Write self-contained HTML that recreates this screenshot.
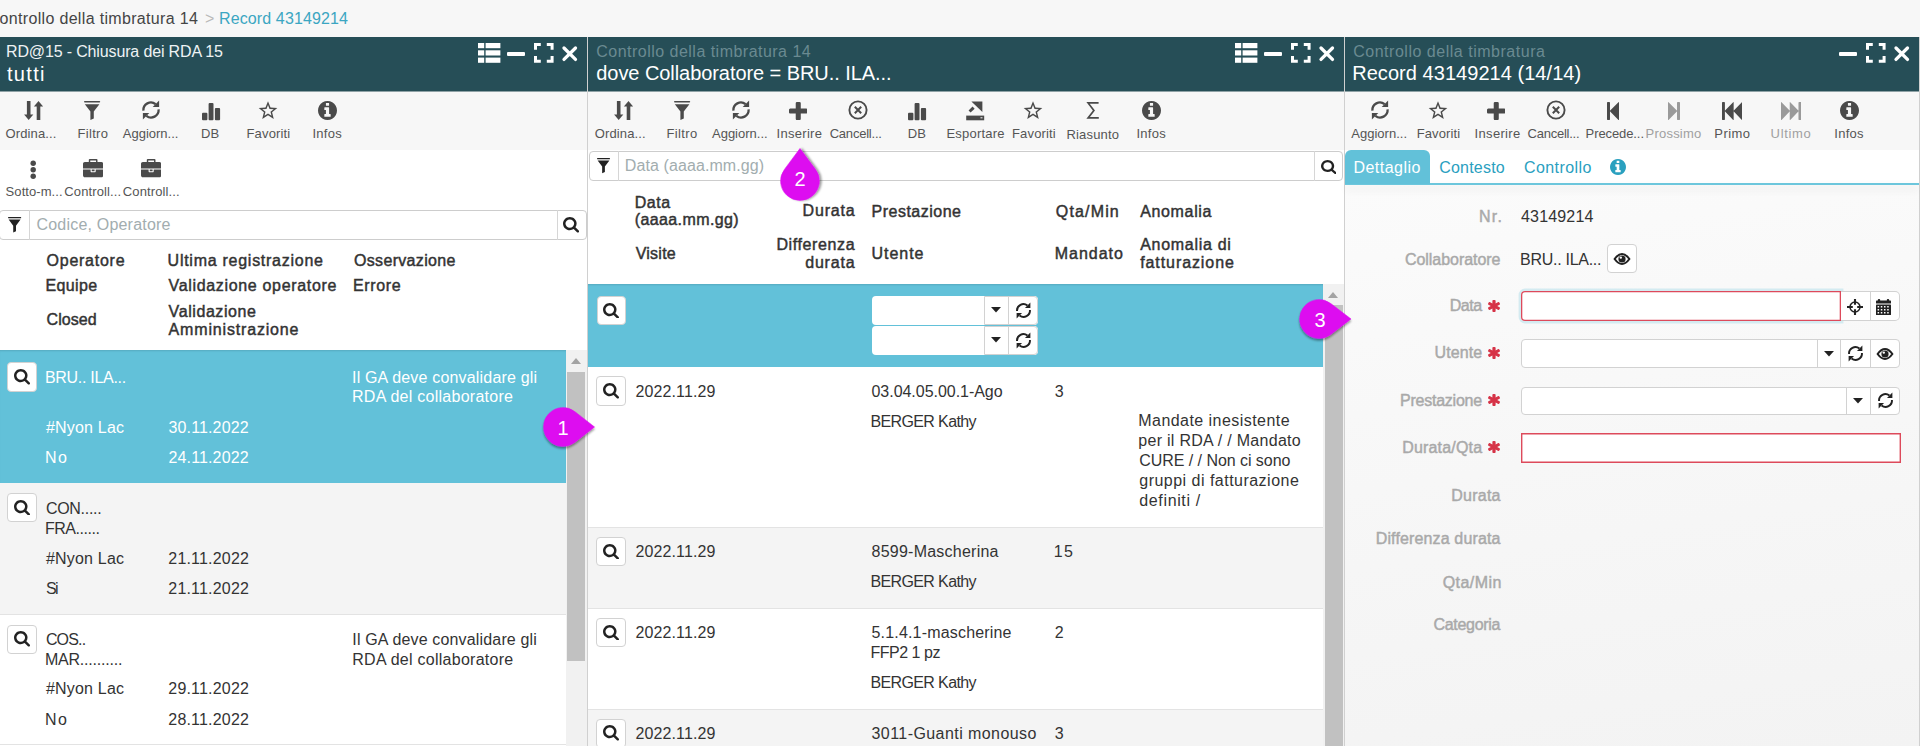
<!DOCTYPE html><html><head><meta charset='utf-8'><title>Controllo della timbratura</title><style>
html,body{margin:0;padding:0;width:1920px;height:746px;overflow:hidden;background:#f7f7f7;position:relative;font-family:"Liberation Sans",sans-serif;}
.t{position:absolute;white-space:nowrap;line-height:1;font-family:"Liberation Sans",sans-serif;}
svg{display:block}
</style></head><body>
<div class='t' style='left:-0.50px;top:11.40px;font-size:16px;color:#454545;letter-spacing:0.332px;'>ontrollo della timbratura 14</div>
<div class='t' style='left:205.00px;top:11.40px;font-size:16px;color:#b9b9b9;'>&gt;</div>
<div class='t' style='left:219.00px;top:11.40px;font-size:16px;color:#3ba6c2;letter-spacing:0.121px;'>Record 43149214</div>
<div style='position:absolute;left:-1px;top:37px;width:588px;height:54px;background:#264e57'></div>
<div style='position:absolute;left:-1px;top:91px;width:588px;height:1px;background:#8fa2a6'></div>
<div style='position:absolute;left:-1px;top:92px;width:588px;height:58px;background:#f7f7f7'></div>
<div style='position:absolute;left:588px;top:37px;width:756px;height:54px;background:#264e57'></div>
<div style='position:absolute;left:588px;top:91px;width:756px;height:1px;background:#8fa2a6'></div>
<div style='position:absolute;left:588px;top:92px;width:756px;height:58px;background:#f7f7f7'></div>
<div style='position:absolute;left:1345px;top:37px;width:574px;height:54px;background:#264e57'></div>
<div style='position:absolute;left:1345px;top:91px;width:574px;height:1px;background:#8fa2a6'></div>
<div style='position:absolute;left:1345px;top:92px;width:574px;height:58px;background:#f7f7f7'></div>
<div style='position:absolute;left:0px;top:150px;width:587px;height:596px;background:#fff'></div>
<div style='position:absolute;left:588px;top:150px;width:756px;height:596px;background:#fff'></div>
<div style='position:absolute;left:1345px;top:185px;width:574px;height:561px;background:linear-gradient(172deg,#fbfbfb 0%,#f6f6f6 60%,#f3f3f3 100%)'></div>
<div style='position:absolute;left:587px;top:37px;width:1px;height:709px;background:#d0d0d0'></div>
<div style='position:absolute;left:1344px;top:37px;width:1px;height:709px;background:#d0d0d0'></div>
<div style='position:absolute;left:1919px;top:37px;width:1px;height:709px;background:#d0d0d0'></div>
<svg style='position:absolute;left:478.20px;top:42.70px;overflow:visible' width='22.4' height='19.8' viewBox='0 0 22.4 19.8'><g fill='#fff'><rect x='0' y='0' width='6.2' height='5.2'/><rect x='7.6' y='0' width='14.8' height='5.2'/><rect x='0' y='7.3' width='6.2' height='5.2'/><rect x='7.6' y='7.3' width='14.8' height='5.2'/><rect x='0' y='14.6' width='6.2' height='5.2'/><rect x='7.6' y='14.6' width='14.8' height='5.2'/></g></svg>
<div style='position:absolute;left:507.4px;top:51.8px;width:17.6px;height:4px;background:#fff;border-radius:1px'></div>
<svg style='position:absolute;left:533.60px;top:43.00px;overflow:visible' width='19.6' height='19.7' viewBox='0 0 19.6 19.7'><path d='M1.5 6.8V1.5H6.8M12.8 1.5h5.3V6.8M18.1 12.9v5.3H12.8M6.8 18.2H1.5V12.9' fill='none' stroke='#fff' stroke-width='3'/></svg>
<svg style='position:absolute;left:561.50px;top:45.60px;overflow:visible' width='15.5' height='15.4' viewBox='0 0 15.5 15.4'><path d='M2 2L13.5 13.4M13.5 2L2 13.4' stroke='#fff' stroke-width='3.3' stroke-linecap='round'/></svg>
<svg style='position:absolute;left:1235.20px;top:42.70px;overflow:visible' width='22.4' height='19.8' viewBox='0 0 22.4 19.8'><g fill='#fff'><rect x='0' y='0' width='6.2' height='5.2'/><rect x='7.6' y='0' width='14.8' height='5.2'/><rect x='0' y='7.3' width='6.2' height='5.2'/><rect x='7.6' y='7.3' width='14.8' height='5.2'/><rect x='0' y='14.6' width='6.2' height='5.2'/><rect x='7.6' y='14.6' width='14.8' height='5.2'/></g></svg>
<div style='position:absolute;left:1264.4px;top:51.8px;width:17.6px;height:4px;background:#fff;border-radius:1px'></div>
<svg style='position:absolute;left:1290.60px;top:43.00px;overflow:visible' width='19.6' height='19.7' viewBox='0 0 19.6 19.7'><path d='M1.5 6.8V1.5H6.8M12.8 1.5h5.3V6.8M18.1 12.9v5.3H12.8M6.8 18.2H1.5V12.9' fill='none' stroke='#fff' stroke-width='3'/></svg>
<svg style='position:absolute;left:1318.50px;top:45.60px;overflow:visible' width='15.5' height='15.4' viewBox='0 0 15.5 15.4'><path d='M2 2L13.5 13.4M13.5 2L2 13.4' stroke='#fff' stroke-width='3.3' stroke-linecap='round'/></svg>
<div style='position:absolute;left:1839.4px;top:51.8px;width:17.6px;height:4px;background:#fff;border-radius:1px'></div>
<svg style='position:absolute;left:1865.60px;top:43.00px;overflow:visible' width='19.6' height='19.7' viewBox='0 0 19.6 19.7'><path d='M1.5 6.8V1.5H6.8M12.8 1.5h5.3V6.8M18.1 12.9v5.3H12.8M6.8 18.2H1.5V12.9' fill='none' stroke='#fff' stroke-width='3'/></svg>
<svg style='position:absolute;left:1893.50px;top:45.60px;overflow:visible' width='15.5' height='15.4' viewBox='0 0 15.5 15.4'><path d='M2 2L13.5 13.4M13.5 2L2 13.4' stroke='#fff' stroke-width='3.3' stroke-linecap='round'/></svg>
<div class='t' style='left:6.00px;top:43.60px;font-size:16px;color:#eef3f4;letter-spacing:-0.145px;'>RD@15 - Chiusura dei RDA 15</div>
<div class='t' style='left:7.00px;top:63.60px;font-size:20px;color:#fff;letter-spacing:1.302px;'>tutti</div>
<div class='t' style='left:596.30px;top:43.70px;font-size:16px;color:#6a8a91;letter-spacing:0.479px;'>Controllo della timbratura 14</div>
<div class='t' style='left:596.30px;top:63.30px;font-size:20px;color:#fff;letter-spacing:-0.066px;'>dove Collaboratore = BRU.. ILA...</div>
<div class='t' style='left:1353.20px;top:43.70px;font-size:16px;color:#6a8a91;letter-spacing:0.518px;'>Controllo della timbratura</div>
<div class='t' style='left:1352.20px;top:63.30px;font-size:20px;color:#fff;letter-spacing:0.046px;'>Record 43149214 (14/14)</div>
<svg style='position:absolute;left:24.40px;top:101.00px;overflow:visible' width='19' height='19' viewBox='0 0 19 19'><g fill='#4a4a4a'><rect x='2.9' y='0' width='3.6' height='14'/><polygon points='0.1,13.4 9.3,13.4 4.7,19'/><rect x='12.7' y='5' width='3.6' height='14'/><polygon points='9.9,5.6 19.1,5.6 14.5,0'/></g></svg>
<div class='t' style='left:5.60px;top:126.50px;font-size:13px;color:#555;letter-spacing:0.107px;'>Ordina...</div>
<svg style='position:absolute;left:84.40px;top:101.00px;overflow:visible' width='16.2' height='19.0' viewBox='0 0 16.2 19'><g fill='#4a4a4a'><rect x='0' y='0' width='16.2' height='1.6' rx='0.8'/><path d='M0.8 3.2H15.4L9.8 10.6V17.4L6.4 19V10.6Z'/></g></svg>
<div class='t' style='left:77.40px;top:126.50px;font-size:13px;color:#555;letter-spacing:0.348px;'>Filtro</div>
<svg style='position:absolute;left:141.30px;top:100.40px;overflow:visible' width='20.00' height='20.00' viewBox='-10 -10 20 20'><g fill='none' stroke='#4a4a4a' stroke-width='2.3'><path d='M-7.6 0.6A7.5 7.5 0 0 1 4.6 -5.8'/><path d='M7.6 -0.6A7.5 7.5 0 0 1 -4.6 5.8'/></g><g fill='#4a4a4a'><polygon points='8.1,-9.4 8.1,-3.0 1.7,-3.0'/><polygon points='-8.1,9.4 -8.1,3.0 -1.7,3.0'/></g></svg>
<div class='t' style='left:122.80px;top:126.50px;font-size:13px;color:#555;letter-spacing:-0.004px;'>Aggiorn...</div>
<svg style='position:absolute;left:201.75px;top:102.70px;overflow:visible' width='18.1' height='17.3' viewBox='0 0 18.1 17.3'><g fill='#4a4a4a'><rect x='0' y='9.8' width='5.4' height='7.5' rx='1'/><rect x='6.6' y='0' width='4.9' height='17.3' rx='1'/><rect x='12.9' y='4.9' width='5.2' height='12.4' rx='1'/></g></svg>
<div class='t' style='left:201.00px;top:126.50px;font-size:13px;color:#555;letter-spacing:0.012px;'>DB</div>
<svg style='position:absolute;left:257.90px;top:100.70px;overflow:visible' width='20' height='20' viewBox='-10 -10 20 20'><path fill-rule='evenodd' fill='#4a4a4a' d='M0.00 -9.80 L2.53 -3.48 L9.32 -3.03 L4.09 1.33 L5.76 7.93 L0.00 4.30 L-5.76 7.93 L-4.09 1.33 L-9.32 -3.03 L-2.53 -3.48Z M0.00 -6.00 L1.53 -2.10 L5.71 -1.85 L2.47 0.80 L3.53 4.85 L0.00 2.60 L-3.53 4.85 L-2.47 0.80 L-5.71 -1.85 L-1.53 -2.10Z'/></svg>
<div class='t' style='left:246.50px;top:126.50px;font-size:13px;color:#555;letter-spacing:0.153px;'>Favoriti</div>
<svg style='position:absolute;left:317.90px;top:101.00px' width='19.00' height='19.00' viewBox='0 -1408 1536 1536' preserveAspectRatio='none'><path fill='#4a4a4a' transform='scale(1,-1)' d='M1024 160v160q0 14 -9 23t-23 9h-96v512q0 14 -9 23t-23 9h-320q-14 0 -23 -9t-9 -23v-160q0 -14 9 -23t23 -9h96v-320h-96q-14 0 -23 -9t-9 -23v-160q0 -14 9 -23t23 -9h448q14 0 23 9t9 23zM896 1056v160q0 14 -9 23t-23 9h-192q-14 0 -23 -9t-9 -23v-160q0 -14 9 -23
t23 -9h192q14 0 23 9t9 23zM1536 640q0 -209 -103 -385.5t-279.5 -279.5t-385.5 -103t-385.5 103t-279.5 279.5t-103 385.5t103 385.5t279.5 279.5t385.5 103t385.5 -103t279.5 -279.5t103 -385.5z'/></svg>
<div class='t' style='left:312.50px;top:126.50px;font-size:13px;color:#555;letter-spacing:0.254px;'>Infos</div>
<svg style='position:absolute;left:613.70px;top:101.00px;overflow:visible' width='19' height='19' viewBox='0 0 19 19'><g fill='#4a4a4a'><rect x='2.9' y='0' width='3.6' height='14'/><polygon points='0.1,13.4 9.3,13.4 4.7,19'/><rect x='12.7' y='5' width='3.6' height='14'/><polygon points='9.9,5.6 19.1,5.6 14.5,0'/></g></svg>
<div class='t' style='left:594.70px;top:126.50px;font-size:13px;color:#555;letter-spacing:0.132px;'>Ordina...</div>
<svg style='position:absolute;left:673.60px;top:101.00px;overflow:visible' width='16.2' height='19.0' viewBox='0 0 16.2 19'><g fill='#4a4a4a'><rect x='0' y='0' width='16.2' height='1.6' rx='0.8'/><path d='M0.8 3.2H15.4L9.8 10.6V17.4L6.4 19V10.6Z'/></g></svg>
<div class='t' style='left:666.50px;top:126.50px;font-size:13px;color:#555;letter-spacing:0.368px;'>Filtro</div>
<svg style='position:absolute;left:730.80px;top:100.40px;overflow:visible' width='20.00' height='20.00' viewBox='-10 -10 20 20'><g fill='none' stroke='#4a4a4a' stroke-width='2.3'><path d='M-7.6 0.6A7.5 7.5 0 0 1 4.6 -5.8'/><path d='M7.6 -0.6A7.5 7.5 0 0 1 -4.6 5.8'/></g><g fill='#4a4a4a'><polygon points='8.1,-9.4 8.1,-3.0 1.7,-3.0'/><polygon points='-8.1,9.4 -8.1,3.0 -1.7,3.0'/></g></svg>
<div class='t' style='left:712.00px;top:126.50px;font-size:13px;color:#555;letter-spacing:-0.004px;'>Aggiorn...</div>
<svg style='position:absolute;left:788.70px;top:102.10px' width='18.50' height='18.10' viewBox='0 -1408 1408 1408' preserveAspectRatio='none'><path fill='#4a4a4a' transform='scale(1,-1)' d='M1408 800v-192q0 -40 -28 -68t-68 -28h-416v-416q0 -40 -28 -68t-68 -28h-192q-40 0 -68 28t-28 68v416h-416q-40 0 -68 28t-28 68v192q0 40 28 68t68 28h416v416q0 40 28 68t68 28h192q40 0 68 -28t28 -68v-416h416q40 0 68 -28t28 -68z'/></svg>
<div class='t' style='left:776.50px;top:126.50px;font-size:13px;color:#555;letter-spacing:0.297px;'>Inserire</div>
<svg style='position:absolute;left:848.00px;top:100.40px;overflow:visible' width='20' height='20' viewBox='-10 -10 20 20'><circle r='8.6' fill='none' stroke='#4a4a4a' stroke-width='1.9'/><path d='M-3.2 -3.2L3.2 3.2M3.2 -3.2L-3.2 3.2' stroke='#4a4a4a' stroke-width='2'/></svg>
<div class='t' style='left:829.70px;top:126.50px;font-size:13px;color:#555;letter-spacing:-0.220px;'>Cancell...</div>
<svg style='position:absolute;left:908.45px;top:102.70px;overflow:visible' width='18.1' height='17.3' viewBox='0 0 18.1 17.3'><g fill='#4a4a4a'><rect x='0' y='9.8' width='5.4' height='7.5' rx='1'/><rect x='6.6' y='0' width='4.9' height='17.3' rx='1'/><rect x='12.9' y='4.9' width='5.2' height='12.4' rx='1'/></g></svg>
<div class='t' style='left:907.70px;top:126.50px;font-size:13px;color:#555;letter-spacing:0.212px;'>DB</div>
<svg style='position:absolute;left:965.80px;top:100.50px;overflow:visible' width='18.4' height='20' viewBox='0 0 18.4 20'><g fill='#4a4a4a'><path d='M0.2 14.6H18.2V19.3H0.2Z'/><rect x='14.5' y='16.3' width='2' height='1' fill='#f7f7f7'/><path d='M5.4 0.5H16.4V10.9Z'/><path d='M3.6 10.6L7.6 6.6' stroke='#4a4a4a' stroke-width='2.9'/></g></svg>
<div class='t' style='left:946.50px;top:126.50px;font-size:13px;color:#555;letter-spacing:0.196px;'>Esportare</div>
<svg style='position:absolute;left:1023.20px;top:100.70px;overflow:visible' width='20' height='20' viewBox='-10 -10 20 20'><path fill-rule='evenodd' fill='#4a4a4a' d='M0.00 -9.80 L2.53 -3.48 L9.32 -3.03 L4.09 1.33 L5.76 7.93 L0.00 4.30 L-5.76 7.93 L-4.09 1.33 L-9.32 -3.03 L-2.53 -3.48Z M0.00 -6.00 L1.53 -2.10 L5.71 -1.85 L2.47 0.80 L3.53 4.85 L0.00 2.60 L-3.53 4.85 L-2.47 0.80 L-5.71 -1.85 L-1.53 -2.10Z'/></svg>
<div class='t' style='left:1012.00px;top:126.50px;font-size:13px;color:#555;letter-spacing:0.153px;'>Favoriti</div>
<svg style='position:absolute;left:1087.00px;top:102.00px;overflow:visible' width='12' height='17' viewBox='0 0 12 17'><path d='M11.6 0.9H1.1L6.9 8.4L1.1 15.9H11.8' fill='none' stroke='#4a4a4a' stroke-width='1.7'/></svg>
<div class='t' style='left:1066.50px;top:127.80px;font-size:13px;color:#555;letter-spacing:0.160px;'>Riasunto</div>
<svg style='position:absolute;left:1141.80px;top:101.00px' width='19.00' height='19.00' viewBox='0 -1408 1536 1536' preserveAspectRatio='none'><path fill='#4a4a4a' transform='scale(1,-1)' d='M1024 160v160q0 14 -9 23t-23 9h-96v512q0 14 -9 23t-23 9h-320q-14 0 -23 -9t-9 -23v-160q0 -14 9 -23t23 -9h96v-320h-96q-14 0 -23 -9t-9 -23v-160q0 -14 9 -23t23 -9h448q14 0 23 9t9 23zM896 1056v160q0 14 -9 23t-23 9h-192q-14 0 -23 -9t-9 -23v-160q0 -14 9 -23
t23 -9h192q14 0 23 9t9 23zM1536 640q0 -209 -103 -385.5t-279.5 -279.5t-385.5 -103t-385.5 103t-279.5 279.5t-103 385.5t103 385.5t279.5 279.5t385.5 103t385.5 -103t279.5 -279.5t103 -385.5z'/></svg>
<div class='t' style='left:1136.50px;top:126.50px;font-size:13px;color:#555;letter-spacing:0.254px;'>Infos</div>
<svg style='position:absolute;left:1369.80px;top:100.40px;overflow:visible' width='20.00' height='20.00' viewBox='-10 -10 20 20'><g fill='none' stroke='#4a4a4a' stroke-width='2.3'><path d='M-7.6 0.6A7.5 7.5 0 0 1 4.6 -5.8'/><path d='M7.6 -0.6A7.5 7.5 0 0 1 -4.6 5.8'/></g><g fill='#4a4a4a'><polygon points='8.1,-9.4 8.1,-3.0 1.7,-3.0'/><polygon points='-8.1,9.4 -8.1,3.0 -1.7,3.0'/></g></svg>
<div class='t' style='left:1351.30px;top:126.50px;font-size:13px;color:#555;letter-spacing:0.008px;'>Aggiorn...</div>
<svg style='position:absolute;left:1428.00px;top:100.70px;overflow:visible' width='20' height='20' viewBox='-10 -10 20 20'><path fill-rule='evenodd' fill='#4a4a4a' d='M0.00 -9.80 L2.53 -3.48 L9.32 -3.03 L4.09 1.33 L5.76 7.93 L0.00 4.30 L-5.76 7.93 L-4.09 1.33 L-9.32 -3.03 L-2.53 -3.48Z M0.00 -6.00 L1.53 -2.10 L5.71 -1.85 L2.47 0.80 L3.53 4.85 L0.00 2.60 L-3.53 4.85 L-2.47 0.80 L-5.71 -1.85 L-1.53 -2.10Z'/></svg>
<div class='t' style='left:1416.70px;top:126.50px;font-size:13px;color:#555;letter-spacing:0.124px;'>Favoriti</div>
<svg style='position:absolute;left:1486.70px;top:102.10px' width='18.50' height='18.10' viewBox='0 -1408 1408 1408' preserveAspectRatio='none'><path fill='#4a4a4a' transform='scale(1,-1)' d='M1408 800v-192q0 -40 -28 -68t-68 -28h-416v-416q0 -40 -28 -68t-68 -28h-192q-40 0 -68 28t-28 68v416h-416q-40 0 -68 28t-28 68v192q0 40 28 68t68 28h416v416q0 40 28 68t68 28h192q40 0 68 -28t28 -68v-416h416q40 0 68 -28t28 -68z'/></svg>
<div class='t' style='left:1474.60px;top:126.50px;font-size:13px;color:#555;letter-spacing:0.326px;'>Inserire</div>
<svg style='position:absolute;left:1546.20px;top:100.40px;overflow:visible' width='20' height='20' viewBox='-10 -10 20 20'><circle r='8.6' fill='none' stroke='#4a4a4a' stroke-width='1.9'/><path d='M-3.2 -3.2L3.2 3.2M3.2 -3.2L-3.2 3.2' stroke='#4a4a4a' stroke-width='2'/></svg>
<div class='t' style='left:1527.50px;top:126.50px;font-size:13px;color:#555;letter-spacing:-0.231px;'>Cancell...</div>
<svg style='position:absolute;left:1607.40px;top:102.40px' width='12.00' height='18.10' viewBox='0 -1409.4398803710938 1024 1538.8798828125' preserveAspectRatio='none'><path fill='#4a4a4a' transform='scale(1,-1)' d='M979 1395q19 19 32 13t13 -32v-1472q0 -26 -13 -32t-32 13l-710 710q-9 9 -13 19v-678q0 -26 -19 -45t-45 -19h-128q-26 0 -45 19t-19 45v1408q0 26 19 45t45 19h128q26 0 45 -19t19 -45v-678q4 10 13 19z'/></svg>
<div class='t' style='left:1585.60px;top:126.50px;font-size:13px;color:#555;letter-spacing:-0.094px;'>Precede...</div>
<svg style='position:absolute;left:1667.90px;top:102.40px' width='12.00' height='18.10' viewBox='0 -1409.4398803710938 1024 1538.8798828125' preserveAspectRatio='none'><path fill='#9a9a9a' transform='scale(1,-1)' d='M45 -115q-19 -19 -32 -13t-13 32v1472q0 26 13 32t32 -13l710 -710q9 -9 13 -19v678q0 26 19 45t45 19h128q26 0 45 -19t19 -45v-1408q0 -26 -19 -45t-45 -19h-128q-26 0 -45 19t-19 45v678q-4 -10 -13 -19z'/></svg>
<div class='t' style='left:1645.60px;top:126.50px;font-size:13px;color:#a0a0a0;letter-spacing:0.208px;'>Prossimo</div>
<svg style='position:absolute;left:1721.50px;top:102.40px' width='20.40' height='18.10' viewBox='0 -1409.4398803710938 1792 1538.8798828125' preserveAspectRatio='none'><path fill='#4a4a4a' transform='scale(1,-1)' d='M1747 1395q19 19 32 13t13 -32v-1472q0 -26 -13 -32t-32 13l-710 710q-9 9 -13 19v-710q0 -26 -13 -32t-32 13l-710 710q-9 9 -13 19v-678q0 -26 -19 -45t-45 -19h-128q-26 0 -45 19t-19 45v1408q0 26 19 45t45 19h128q26 0 45 -19t19 -45v-678q4 10 13 19l710 710
q19 19 32 13t13 -32v-710q4 10 13 19z'/></svg>
<div class='t' style='left:1714.30px;top:126.50px;font-size:13px;color:#555;letter-spacing:0.421px;'>Primo</div>
<svg style='position:absolute;left:1780.60px;top:102.40px' width='20.40' height='18.10' viewBox='0 -1409.4398803710938 1792 1538.8798828125' preserveAspectRatio='none'><path fill='#9a9a9a' transform='scale(1,-1)' d='M45 -115q-19 -19 -32 -13t-13 32v1472q0 26 13 32t32 -13l710 -710q9 -9 13 -19v710q0 26 13 32t32 -13l710 -710q9 -9 13 -19v678q0 26 19 45t45 19h128q26 0 45 -19t19 -45v-1408q0 -26 -19 -45t-45 -19h-128q-26 0 -45 19t-19 45v678q-4 -10 -13 -19l-710 -710
q-19 -19 -32 -13t-13 32v710q-4 -10 -13 -19z'/></svg>
<div class='t' style='left:1770.60px;top:126.50px;font-size:13px;color:#a0a0a0;letter-spacing:0.679px;'>Ultimo</div>
<svg style='position:absolute;left:1839.90px;top:101.00px' width='19.00' height='19.00' viewBox='0 -1408 1536 1536' preserveAspectRatio='none'><path fill='#4a4a4a' transform='scale(1,-1)' d='M1024 160v160q0 14 -9 23t-23 9h-96v512q0 14 -9 23t-23 9h-320q-14 0 -23 -9t-9 -23v-160q0 -14 9 -23t23 -9h96v-320h-96q-14 0 -23 -9t-9 -23v-160q0 -14 9 -23t23 -9h448q14 0 23 9t9 23zM896 1056v160q0 14 -9 23t-23 9h-192q-14 0 -23 -9t-9 -23v-160q0 -14 9 -23
t23 -9h192q14 0 23 9t9 23zM1536 640q0 -209 -103 -385.5t-279.5 -279.5t-385.5 -103t-385.5 103t-279.5 279.5t-103 385.5t103 385.5t279.5 279.5t385.5 103t385.5 -103t279.5 -279.5t103 -385.5z'/></svg>
<div class='t' style='left:1834.30px;top:126.50px;font-size:13px;color:#555;letter-spacing:0.254px;'>Infos</div>
<svg style='position:absolute;left:30.00px;top:160.00px;overflow:visible' width='6.4' height='19.5' viewBox='0 0 6.4 19.5'><g fill='#4a4a4a'><circle cx='3.2' cy='3.3' r='2.7'/><circle cx='3.2' cy='9.8' r='2.7'/><circle cx='3.2' cy='16.2' r='2.7'/></g></svg>
<svg style='position:absolute;left:82.50px;top:159.40px' width='20.30' height='18.20' viewBox='0 -1536 1792 1536' preserveAspectRatio='none'><path fill='#4a4a4a' transform='scale(1,-1)' d='M640 1280h512v128h-512v-128zM1792 640v-480q0 -66 -47 -113t-113 -47h-1472q-66 0 -113 47t-47 113v480h672v-160q0 -26 19 -45t45 -19h320q26 0 45 19t19 45v160h672zM1024 640v-128h-256v128h256zM1792 1120v-384h-1792v384q0 66 47 113t113 47h352v160q0 40 28 68
t68 28h576q40 0 68 -28t28 -68v-160h352q66 0 113 -47t47 -113z'/></svg>
<svg style='position:absolute;left:141.00px;top:159.40px' width='20.30' height='18.20' viewBox='0 -1536 1792 1536' preserveAspectRatio='none'><path fill='#4a4a4a' transform='scale(1,-1)' d='M640 1280h512v128h-512v-128zM1792 640v-480q0 -66 -47 -113t-113 -47h-1472q-66 0 -113 47t-47 113v480h672v-160q0 -26 19 -45t45 -19h320q26 0 45 19t19 45v160h672zM1024 640v-128h-256v128h256zM1792 1120v-384h-1792v384q0 66 47 113t113 47h352v160q0 40 28 68
t68 28h576q40 0 68 -28t28 -68v-160h352q66 0 113 -47t47 -113z'/></svg>
<div class='t' style='left:5.60px;top:185.00px;font-size:13px;color:#555;letter-spacing:0.074px;'>Sotto-m...</div>
<div class='t' style='left:64.30px;top:185.00px;font-size:13px;color:#555;letter-spacing:0.128px;'>Controll...</div>
<div class='t' style='left:122.80px;top:185.00px;font-size:13px;color:#555;letter-spacing:0.118px;'>Controll...</div>
<div style='position:absolute;left:-1px;top:209.5px;width:587.5px;height:30.5px;background:#fff;border:1px solid #cdcdcd;border-radius:4px;box-sizing:border-box'></div>
<div style='position:absolute;left:28.5px;top:209.5px;width:1px;height:30.5px;background:#d6d6d6'></div>
<div style='position:absolute;left:556.5px;top:209.5px;width:1px;height:30.5px;background:#d6d6d6'></div>
<div class='t' style='left:36.50px;top:217.00px;font-size:16px;color:#a2adaf;letter-spacing:0.198px;'>Codice, Operatore</div>
<svg style='position:absolute;left:7.64px;top:216.70px;overflow:visible' width='13.21578947368421' height='15.5' viewBox='0 0 16.2 19'><g fill='#222'><rect x='0' y='0' width='16.2' height='1.6' rx='0.8'/><path d='M0.8 3.2H15.4L9.8 10.6V17.4L6.4 19V10.6Z'/></g></svg>
<svg style='position:absolute;left:563.30px;top:217.20px' width='16.10' height='15.60' viewBox='0 -1408 1664 1664' preserveAspectRatio='none'><path fill='#222' transform='scale(1,-1)' d='M1152 704q0 185 -131.5 316.5t-316.5 131.5t-316.5 -131.5t-131.5 -316.5t131.5 -316.5t316.5 -131.5t316.5 131.5t131.5 316.5zM1664 -128q0 -52 -38 -90t-90 -38q-54 0 -90 38l-343 342q-179 -124 -399 -124q-143 0 -273.5 55.5t-225 150t-150 225t-55.5 273.5
t55.5 273.5t150 225t225 150t273.5 55.5t273.5 -55.5t225 -150t150 -225t55.5 -273.5q0 -220 -124 -399l343 -343q37 -37 37 -90z'/></svg>
<div style='position:absolute;left:588.5px;top:150.5px;width:754.0px;height:30.0px;background:#fff;border:1px solid #cdcdcd;border-radius:4px;box-sizing:border-box'></div>
<div style='position:absolute;left:618px;top:150.5px;width:1px;height:30.0px;background:#d6d6d6'></div>
<div style='position:absolute;left:1313.5px;top:150.5px;width:1px;height:30.0px;background:#d6d6d6'></div>
<div class='t' style='left:624.80px;top:157.80px;font-size:16px;color:#a2adaf;letter-spacing:0.093px;'>Data (aaaa.mm.gg)</div>
<svg style='position:absolute;left:596.83px;top:158.00px;overflow:visible' width='13.045263157894746' height='15.300000000000011' viewBox='0 0 16.2 19'><g fill='#222'><rect x='0' y='0' width='16.2' height='1.6' rx='0.8'/><path d='M0.8 3.2H15.4L9.8 10.6V17.4L6.4 19V10.6Z'/></g></svg>
<svg style='position:absolute;left:1320.60px;top:159.70px' width='15.60' height='14.20' viewBox='0 -1408 1664 1664' preserveAspectRatio='none'><path fill='#222' transform='scale(1,-1)' d='M1152 704q0 185 -131.5 316.5t-316.5 131.5t-316.5 -131.5t-131.5 -316.5t131.5 -316.5t316.5 -131.5t316.5 131.5t131.5 316.5zM1664 -128q0 -52 -38 -90t-90 -38q-54 0 -90 38l-343 342q-179 -124 -399 -124q-143 0 -273.5 55.5t-225 150t-150 225t-55.5 273.5
t55.5 273.5t150 225t225 150t273.5 55.5t273.5 -55.5t225 -150t150 -225t55.5 -273.5q0 -220 -124 -399l343 -343q37 -37 37 -90z'/></svg>
<div class='t' style='left:46.60px;top:253.00px;font-size:16px;color:#333;letter-spacing:0.739px;-webkit-text-stroke:0.45px #333;'>Operatore</div>
<div class='t' style='left:167.60px;top:253.00px;font-size:16px;color:#333;letter-spacing:0.735px;-webkit-text-stroke:0.45px #333;'>Ultima registrazione</div>
<div class='t' style='left:354.00px;top:253.00px;font-size:16px;color:#333;letter-spacing:0.321px;-webkit-text-stroke:0.45px #333;'>Osservazione</div>
<div class='t' style='left:45.60px;top:278.40px;font-size:16px;color:#333;letter-spacing:0.346px;-webkit-text-stroke:0.45px #333;'>Equipe</div>
<div class='t' style='left:168.60px;top:278.40px;font-size:16px;color:#333;letter-spacing:0.664px;-webkit-text-stroke:0.45px #333;'>Validazione operatore</div>
<div class='t' style='left:353.00px;top:278.40px;font-size:16px;color:#333;letter-spacing:0.659px;-webkit-text-stroke:0.45px #333;'>Errore</div>
<div class='t' style='left:46.60px;top:312.40px;font-size:16px;color:#333;letter-spacing:0.029px;-webkit-text-stroke:0.45px #333;'>Closed</div>
<div class='t' style='left:168.60px;top:304.00px;font-size:16px;color:#333;letter-spacing:0.581px;-webkit-text-stroke:0.45px #333;'>Validazione</div>
<div class='t' style='left:168.60px;top:321.50px;font-size:16px;color:#333;letter-spacing:0.828px;-webkit-text-stroke:0.45px #333;'>Amministrazione</div>
<div style='position:absolute;left:0px;top:350px;width:566px;height:133px;background:#62c1d9;box-shadow:inset 0 2px 2px -1px rgba(0,0,0,0.12)'></div>
<div style='position:absolute;left:7px;top:362px;width:30px;height:30px;background:#fff;border:1px solid #d2d2d2;border-radius:4px;box-sizing:border-box'></div>
<svg style='position:absolute;left:14.00px;top:369.20px' width='16.00' height='15.60' viewBox='0 -1408 1664 1664' preserveAspectRatio='none'><path fill='#222' transform='scale(1,-1)' d='M1152 704q0 185 -131.5 316.5t-316.5 131.5t-316.5 -131.5t-131.5 -316.5t131.5 -316.5t316.5 -131.5t316.5 131.5t131.5 316.5zM1664 -128q0 -52 -38 -90t-90 -38q-54 0 -90 38l-343 342q-179 -124 -399 -124q-143 0 -273.5 55.5t-225 150t-150 225t-55.5 273.5
t55.5 273.5t150 225t225 150t273.5 55.5t273.5 -55.5t225 -150t150 -225t55.5 -273.5q0 -220 -124 -399l343 -343q37 -37 37 -90z'/></svg>
<div class='t' style='left:44.90px;top:369.60px;font-size:16px;color:#fff;letter-spacing:-0.293px;'>BRU.. ILA...</div>
<div class='t' style='left:352.00px;top:369.50px;font-size:16px;color:#fff;letter-spacing:0.181px;'>Il GA deve convalidare gli</div>
<div class='t' style='left:352.00px;top:388.60px;font-size:16px;color:#fff;letter-spacing:0.264px;'>RDA del collaboratore</div>
<div class='t' style='left:45.90px;top:420.00px;font-size:16px;color:#fff;letter-spacing:0.201px;'>#Nyon Lac</div>
<div class='t' style='left:168.50px;top:420.00px;font-size:16px;color:#fff;letter-spacing:0.134px;'>30.11.2022</div>
<div class='t' style='left:44.90px;top:449.60px;font-size:16px;color:#fff;letter-spacing:1.545px;'>No</div>
<div class='t' style='left:168.50px;top:449.60px;font-size:16px;color:#fff;letter-spacing:0.134px;'>24.11.2022</div>
<div style='position:absolute;left:0px;top:483px;width:566px;height:131px;background:#f4f4f4'></div>
<div style='position:absolute;left:0px;top:614px;width:566px;height:1px;background:#e3e3e3'></div>
<div style='position:absolute;left:7px;top:493px;width:29.5px;height:29px;background:#fff;border:1px solid #d2d2d2;border-radius:4px;box-sizing:border-box'></div>
<svg style='position:absolute;left:13.75px;top:499.70px' width='16.00' height='15.60' viewBox='0 -1408 1664 1664' preserveAspectRatio='none'><path fill='#222' transform='scale(1,-1)' d='M1152 704q0 185 -131.5 316.5t-316.5 131.5t-316.5 -131.5t-131.5 -316.5t131.5 -316.5t316.5 -131.5t316.5 131.5t131.5 316.5zM1664 -128q0 -52 -38 -90t-90 -38q-54 0 -90 38l-343 342q-179 -124 -399 -124q-143 0 -273.5 55.5t-225 150t-150 225t-55.5 273.5
t55.5 273.5t150 225t225 150t273.5 55.5t273.5 -55.5t225 -150t150 -225t55.5 -273.5q0 -220 -124 -399l343 -343q37 -37 37 -90z'/></svg>
<div class='t' style='left:45.90px;top:501.00px;font-size:16px;color:#333;letter-spacing:-0.277px;'>CON.....</div>
<div class='t' style='left:44.90px;top:520.50px;font-size:16px;color:#333;letter-spacing:-0.466px;'>FRA......</div>
<div class='t' style='left:45.90px;top:551.00px;font-size:16px;color:#333;letter-spacing:0.201px;'>#Nyon Lac</div>
<div class='t' style='left:168.30px;top:551.00px;font-size:16px;color:#333;letter-spacing:0.190px;'>21.11.2022</div>
<div class='t' style='left:45.90px;top:580.50px;font-size:16px;color:#333;letter-spacing:-1.572px;'>Si</div>
<div class='t' style='left:168.30px;top:580.50px;font-size:16px;color:#333;letter-spacing:0.190px;'>21.11.2022</div>
<div style='position:absolute;left:0px;top:744px;width:566px;height:1px;background:#e3e3e3'></div>
<div style='position:absolute;left:7px;top:624.5px;width:29.5px;height:29px;background:#fff;border:1px solid #d2d2d2;border-radius:4px;box-sizing:border-box'></div>
<svg style='position:absolute;left:13.75px;top:631.20px' width='16.00' height='15.60' viewBox='0 -1408 1664 1664' preserveAspectRatio='none'><path fill='#222' transform='scale(1,-1)' d='M1152 704q0 185 -131.5 316.5t-316.5 131.5t-316.5 -131.5t-131.5 -316.5t131.5 -316.5t316.5 -131.5t316.5 131.5t131.5 316.5zM1664 -128q0 -52 -38 -90t-90 -38q-54 0 -90 38l-343 342q-179 -124 -399 -124q-143 0 -273.5 55.5t-225 150t-150 225t-55.5 273.5
t55.5 273.5t150 225t225 150t273.5 55.5t273.5 -55.5t225 -150t150 -225t55.5 -273.5q0 -220 -124 -399l343 -343q37 -37 37 -90z'/></svg>
<div class='t' style='left:45.90px;top:632.00px;font-size:16px;color:#333;letter-spacing:-0.829px;'>COS..</div>
<div class='t' style='left:44.90px;top:651.60px;font-size:16px;color:#333;letter-spacing:-0.205px;'>MAR..........</div>
<div class='t' style='left:352.30px;top:632.00px;font-size:16px;color:#333;letter-spacing:0.161px;'>Il GA deve convalidare gli</div>
<div class='t' style='left:352.30px;top:651.60px;font-size:16px;color:#333;letter-spacing:0.264px;'>RDA del collaboratore</div>
<div class='t' style='left:45.90px;top:681.00px;font-size:16px;color:#333;letter-spacing:0.201px;'>#Nyon Lac</div>
<div class='t' style='left:168.30px;top:681.00px;font-size:16px;color:#333;letter-spacing:0.190px;'>29.11.2022</div>
<div class='t' style='left:44.90px;top:711.50px;font-size:16px;color:#333;letter-spacing:1.545px;'>No</div>
<div class='t' style='left:168.30px;top:711.50px;font-size:16px;color:#333;letter-spacing:0.190px;'>28.11.2022</div>
<div style='position:absolute;left:566px;top:350px;width:21px;height:396px;background:#f1f1f1'></div>
<svg style='position:absolute;left:571.00px;top:358.00px;overflow:visible' width='10' height='6' viewBox='0 0 10 6'><polygon points='0,6 10,6 5,0' fill='#a3a3a3'/></svg>
<div style='position:absolute;left:567.3px;top:371.6px;width:18.2px;height:289px;background:#c1c1c1'></div>
<div class='t' style='left:634.70px;top:194.80px;font-size:16px;color:#333;letter-spacing:0.584px;-webkit-text-stroke:0.45px #333;'>Data</div>
<div class='t' style='left:634.70px;top:211.50px;font-size:16px;color:#333;letter-spacing:0.399px;-webkit-text-stroke:0.45px #333;'>(aaaa.mm.gg)</div>
<div class='t' style='left:802.60px;top:203.00px;font-size:16px;color:#333;letter-spacing:0.805px;-webkit-text-stroke:0.45px #333;'>Durata</div>
<div class='t' style='left:871.50px;top:203.50px;font-size:16px;color:#333;letter-spacing:0.496px;-webkit-text-stroke:0.45px #333;'>Prestazione</div>
<div class='t' style='left:1055.80px;top:203.50px;font-size:16px;color:#333;letter-spacing:1.155px;-webkit-text-stroke:0.45px #333;'>Qta/Min</div>
<div class='t' style='left:1140.20px;top:203.50px;font-size:16px;color:#333;letter-spacing:0.649px;-webkit-text-stroke:0.45px #333;'>Anomalia</div>
<div class='t' style='left:635.70px;top:245.90px;font-size:16px;color:#333;letter-spacing:0.242px;-webkit-text-stroke:0.45px #333;'>Visite</div>
<div class='t' style='left:776.40px;top:237.30px;font-size:16px;color:#333;letter-spacing:0.624px;-webkit-text-stroke:0.45px #333;'>Differenza</div>
<div class='t' style='left:805.20px;top:254.80px;font-size:16px;color:#333;letter-spacing:0.816px;-webkit-text-stroke:0.45px #333;'>durata</div>
<div class='t' style='left:871.50px;top:246.20px;font-size:16px;color:#333;letter-spacing:0.962px;-webkit-text-stroke:0.45px #333;'>Utente</div>
<div class='t' style='left:1054.80px;top:246.20px;font-size:16px;color:#333;letter-spacing:0.980px;-webkit-text-stroke:0.45px #333;'>Mandato</div>
<div class='t' style='left:1140.20px;top:236.80px;font-size:16px;color:#333;letter-spacing:0.710px;-webkit-text-stroke:0.45px #333;'>Anomalia di</div>
<div class='t' style='left:1140.20px;top:254.50px;font-size:16px;color:#333;letter-spacing:0.913px;-webkit-text-stroke:0.45px #333;'>fatturazione</div>
<div style='position:absolute;left:588px;top:284px;width:735px;height:83px;background:#62c1d9;box-shadow:inset 0 2px 2px -1px rgba(0,0,0,0.12)'></div>
<div style='position:absolute;left:596.5px;top:296px;width:29.5px;height:29px;background:#fff;border:1px solid #d2d2d2;border-radius:4px;box-sizing:border-box'></div>
<svg style='position:absolute;left:603.25px;top:302.70px' width='16.00' height='15.60' viewBox='0 -1408 1664 1664' preserveAspectRatio='none'><path fill='#222' transform='scale(1,-1)' d='M1152 704q0 185 -131.5 316.5t-316.5 131.5t-316.5 -131.5t-131.5 -316.5t131.5 -316.5t316.5 -131.5t316.5 131.5t131.5 316.5zM1664 -128q0 -52 -38 -90t-90 -38q-54 0 -90 38l-343 342q-179 -124 -399 -124q-143 0 -273.5 55.5t-225 150t-150 225t-55.5 273.5
t55.5 273.5t150 225t225 150t273.5 55.5t273.5 -55.5t225 -150t150 -225t55.5 -273.5q0 -220 -124 -399l343 -343q37 -37 37 -90z'/></svg>
<div style='position:absolute;left:872px;top:296px;width:166px;height:28.5px;background:#fff;border-radius:4px'></div>
<div style='position:absolute;left:984.3px;top:296px;width:53.700000000000045px;height:28.5px;background:#fff;border:1px solid #d2d2d2;border-radius:0 4px 4px 0;box-sizing:border-box'></div>
<div style='position:absolute;left:1008.4px;top:296px;width:1px;height:28.5px;background:#d2d2d2'></div>
<svg style='position:absolute;left:991.35px;top:306.75px;overflow:visible' width='10' height='5.5' viewBox='0 0 10 5.5'><polygon points='0,0 10,0 5,5.5' fill='#222'/></svg>
<svg style='position:absolute;left:1014.70px;top:301.75px;overflow:visible' width='17.00' height='17.00' viewBox='-10 -10 20 20'><g fill='none' stroke='#222' stroke-width='2.3'><path d='M-7.6 0.6A7.5 7.5 0 0 1 4.6 -5.8'/><path d='M7.6 -0.6A7.5 7.5 0 0 1 -4.6 5.8'/></g><g fill='#222'><polygon points='8.1,-9.4 8.1,-3.0 1.7,-3.0'/><polygon points='-8.1,9.4 -8.1,3.0 -1.7,3.0'/></g></svg>
<div style='position:absolute;left:872px;top:326px;width:166px;height:28.5px;background:#fff;border-radius:4px'></div>
<div style='position:absolute;left:984.3px;top:326px;width:53.700000000000045px;height:28.5px;background:#fff;border:1px solid #d2d2d2;border-radius:0 4px 4px 0;box-sizing:border-box'></div>
<div style='position:absolute;left:1008.4px;top:326px;width:1px;height:28.5px;background:#d2d2d2'></div>
<svg style='position:absolute;left:991.35px;top:336.75px;overflow:visible' width='10' height='5.5' viewBox='0 0 10 5.5'><polygon points='0,0 10,0 5,5.5' fill='#222'/></svg>
<svg style='position:absolute;left:1014.70px;top:331.75px;overflow:visible' width='17.00' height='17.00' viewBox='-10 -10 20 20'><g fill='none' stroke='#222' stroke-width='2.3'><path d='M-7.6 0.6A7.5 7.5 0 0 1 4.6 -5.8'/><path d='M7.6 -0.6A7.5 7.5 0 0 1 -4.6 5.8'/></g><g fill='#222'><polygon points='8.1,-9.4 8.1,-3.0 1.7,-3.0'/><polygon points='-8.1,9.4 -8.1,3.0 -1.7,3.0'/></g></svg>
<div style='position:absolute;left:588px;top:367px;width:735px;height:160px;background:#fff'></div>
<div style='position:absolute;left:588px;top:527px;width:735px;height:1px;background:#e3e3e3'></div>
<div style='position:absolute;left:596px;top:376px;width:30px;height:29.5px;background:#fff;border:1px solid #d2d2d2;border-radius:4px;box-sizing:border-box'></div>
<svg style='position:absolute;left:603.00px;top:382.95px' width='16.00' height='15.60' viewBox='0 -1408 1664 1664' preserveAspectRatio='none'><path fill='#222' transform='scale(1,-1)' d='M1152 704q0 185 -131.5 316.5t-316.5 131.5t-316.5 -131.5t-131.5 -316.5t131.5 -316.5t316.5 -131.5t316.5 131.5t131.5 316.5zM1664 -128q0 -52 -38 -90t-90 -38q-54 0 -90 38l-343 342q-179 -124 -399 -124q-143 0 -273.5 55.5t-225 150t-150 225t-55.5 273.5
t55.5 273.5t150 225t225 150t273.5 55.5t273.5 -55.5t225 -150t150 -225t55.5 -273.5q0 -220 -124 -399l343 -343q37 -37 37 -90z'/></svg>
<div class='t' style='left:635.50px;top:384.30px;font-size:16px;color:#333;letter-spacing:0.112px;'>2022.11.29</div>
<div class='t' style='left:871.50px;top:384.30px;font-size:16px;color:#333;letter-spacing:-0.035px;'>03.04.05.00.1-Ago</div>
<div class='t' style='left:1054.70px;top:384.30px;font-size:16px;color:#333;'>3</div>
<div class='t' style='left:870.50px;top:413.70px;font-size:16px;color:#333;letter-spacing:-0.630px;'>BERGER Kathy</div>
<div class='t' style='left:1138.30px;top:413.30px;font-size:16px;color:#333;letter-spacing:0.450px;'>Mandate inesistente</div>
<div class='t' style='left:1138.30px;top:433.10px;font-size:16px;color:#333;letter-spacing:0.281px;'>per il RDA / / Mandato</div>
<div class='t' style='left:1139.30px;top:452.90px;font-size:16px;color:#333;letter-spacing:-0.050px;'>CURE / / Non ci sono</div>
<div class='t' style='left:1139.30px;top:472.70px;font-size:16px;color:#333;letter-spacing:0.479px;'>gruppi di fatturazione</div>
<div class='t' style='left:1139.30px;top:492.50px;font-size:16px;color:#333;letter-spacing:0.634px;'>definiti /</div>
<div style='position:absolute;left:588px;top:528px;width:735px;height:81px;background:#f4f4f4'></div>
<div style='position:absolute;left:588px;top:608px;width:735px;height:1px;background:#e3e3e3'></div>
<div style='position:absolute;left:596px;top:536.7px;width:30px;height:29.5px;background:#fff;border:1px solid #d2d2d2;border-radius:4px;box-sizing:border-box'></div>
<svg style='position:absolute;left:603.00px;top:543.65px' width='16.00' height='15.60' viewBox='0 -1408 1664 1664' preserveAspectRatio='none'><path fill='#222' transform='scale(1,-1)' d='M1152 704q0 185 -131.5 316.5t-316.5 131.5t-316.5 -131.5t-131.5 -316.5t131.5 -316.5t316.5 -131.5t316.5 131.5t131.5 316.5zM1664 -128q0 -52 -38 -90t-90 -38q-54 0 -90 38l-343 342q-179 -124 -399 -124q-143 0 -273.5 55.5t-225 150t-150 225t-55.5 273.5
t55.5 273.5t150 225t225 150t273.5 55.5t273.5 -55.5t225 -150t150 -225t55.5 -273.5q0 -220 -124 -399l343 -343q37 -37 37 -90z'/></svg>
<div class='t' style='left:635.50px;top:544.00px;font-size:16px;color:#333;letter-spacing:0.112px;'>2022.11.29</div>
<div class='t' style='left:871.50px;top:544.00px;font-size:16px;color:#333;letter-spacing:0.241px;'>8599-Mascherina</div>
<div class='t' style='left:1053.70px;top:544.00px;font-size:16px;color:#333;letter-spacing:1.302px;'>15</div>
<div class='t' style='left:870.50px;top:573.70px;font-size:16px;color:#333;letter-spacing:-0.630px;'>BERGER Kathy</div>
<div style='position:absolute;left:588px;top:609px;width:735px;height:100px;background:#fff'></div>
<div style='position:absolute;left:588px;top:709px;width:735px;height:1px;background:#e3e3e3'></div>
<div style='position:absolute;left:596px;top:617.6px;width:30px;height:29.5px;background:#fff;border:1px solid #d2d2d2;border-radius:4px;box-sizing:border-box'></div>
<svg style='position:absolute;left:603.00px;top:624.55px' width='16.00' height='15.60' viewBox='0 -1408 1664 1664' preserveAspectRatio='none'><path fill='#222' transform='scale(1,-1)' d='M1152 704q0 185 -131.5 316.5t-316.5 131.5t-316.5 -131.5t-131.5 -316.5t131.5 -316.5t316.5 -131.5t316.5 131.5t131.5 316.5zM1664 -128q0 -52 -38 -90t-90 -38q-54 0 -90 38l-343 342q-179 -124 -399 -124q-143 0 -273.5 55.5t-225 150t-150 225t-55.5 273.5
t55.5 273.5t150 225t225 150t273.5 55.5t273.5 -55.5t225 -150t150 -225t55.5 -273.5q0 -220 -124 -399l343 -343q37 -37 37 -90z'/></svg>
<div class='t' style='left:635.50px;top:625.20px;font-size:16px;color:#333;letter-spacing:0.112px;'>2022.11.29</div>
<div class='t' style='left:871.50px;top:625.20px;font-size:16px;color:#333;letter-spacing:0.179px;'>5.1.4.1-mascherine</div>
<div class='t' style='left:1054.70px;top:625.20px;font-size:16px;color:#333;'>2</div>
<div class='t' style='left:870.50px;top:644.90px;font-size:16px;color:#333;letter-spacing:-0.488px;'>FFP2 1 pz</div>
<div class='t' style='left:870.50px;top:675.00px;font-size:16px;color:#333;letter-spacing:-0.630px;'>BERGER Kathy</div>
<div style='position:absolute;left:588px;top:710px;width:735px;height:36px;background:#f4f4f4'></div>
<div style='position:absolute;left:596px;top:718.5px;width:30px;height:29.5px;background:#fff;border:1px solid #d2d2d2;border-radius:4px;box-sizing:border-box'></div>
<svg style='position:absolute;left:603.00px;top:725.45px' width='16.00' height='15.60' viewBox='0 -1408 1664 1664' preserveAspectRatio='none'><path fill='#222' transform='scale(1,-1)' d='M1152 704q0 185 -131.5 316.5t-316.5 131.5t-316.5 -131.5t-131.5 -316.5t131.5 -316.5t316.5 -131.5t316.5 131.5t131.5 316.5zM1664 -128q0 -52 -38 -90t-90 -38q-54 0 -90 38l-343 342q-179 -124 -399 -124q-143 0 -273.5 55.5t-225 150t-150 225t-55.5 273.5
t55.5 273.5t150 225t225 150t273.5 55.5t273.5 -55.5t225 -150t150 -225t55.5 -273.5q0 -220 -124 -399l343 -343q37 -37 37 -90z'/></svg>
<div class='t' style='left:635.50px;top:725.80px;font-size:16px;color:#333;letter-spacing:0.112px;'>2022.11.29</div>
<div class='t' style='left:871.50px;top:725.80px;font-size:16px;color:#333;letter-spacing:0.431px;'>3011-Guanti monouso</div>
<div class='t' style='left:1054.70px;top:725.80px;font-size:16px;color:#333;'>3</div>
<div style='position:absolute;left:1323px;top:284px;width:21px;height:462px;background:#f1f1f1'></div>
<svg style='position:absolute;left:1328.00px;top:292.00px;overflow:visible' width='10' height='6' viewBox='0 0 10 6'><polygon points='0,6 10,6 5,0' fill='#a3a3a3'/></svg>
<div style='position:absolute;left:1324.5px;top:305px;width:18px;height:441px;background:#c1c1c1'></div>
<div style='position:absolute;left:1345px;top:150px;width:574px;height:33px;background:#fff'></div>
<div style='position:absolute;left:1345px;top:183px;width:574px;height:2px;background:#6cc6dc;box-shadow:0 4px 9px rgba(0,0,0,0.12)'></div>
<div style='position:absolute;left:1345px;top:150px;width:85px;height:34px;background:#62c1d9;border-radius:6px 6px 0 0'></div>
<div class='t' style='left:1353.40px;top:160.20px;font-size:16px;color:#fff;letter-spacing:0.481px;'>Dettaglio</div>
<div class='t' style='left:1439.20px;top:160.20px;font-size:16px;color:#2aa0bf;letter-spacing:0.208px;'>Contesto</div>
<div class='t' style='left:1524.00px;top:160.20px;font-size:16px;color:#2aa0bf;letter-spacing:0.421px;'>Controllo</div>
<svg style='position:absolute;left:1610.00px;top:159.00px' width='16.00' height='16.00' viewBox='0 -1408 1536 1536' preserveAspectRatio='none'><path fill='#2aa0bf' transform='scale(1,-1)' d='M1024 160v160q0 14 -9 23t-23 9h-96v512q0 14 -9 23t-23 9h-320q-14 0 -23 -9t-9 -23v-160q0 -14 9 -23t23 -9h96v-320h-96q-14 0 -23 -9t-9 -23v-160q0 -14 9 -23t23 -9h448q14 0 23 9t9 23zM896 1056v160q0 14 -9 23t-23 9h-192q-14 0 -23 -9t-9 -23v-160q0 -14 9 -23
t23 -9h192q14 0 23 9t9 23zM1536 640q0 -209 -103 -385.5t-279.5 -279.5t-385.5 -103t-385.5 103t-279.5 279.5t-103 385.5t103 385.5t279.5 279.5t385.5 103t385.5 -103t279.5 -279.5t103 -385.5z'/></svg>
<div class='t' style='left:1479.10px;top:208.80px;font-size:16px;color:#a9a9a9;letter-spacing:1.225px;-webkit-text-stroke:0.45px #a9a9a9;'>Nr.</div>
<div class='t' style='left:1521.00px;top:208.80px;font-size:16px;color:#333;letter-spacing:0.173px;'>43149214</div>
<div class='t' style='left:1405.00px;top:252.20px;font-size:16px;color:#a9a9a9;letter-spacing:-0.051px;-webkit-text-stroke:0.45px #a9a9a9;'>Collaboratore</div>
<div class='t' style='left:1520.00px;top:252.20px;font-size:16px;color:#333;letter-spacing:-0.275px;'>BRU.. ILA...</div>
<div style='position:absolute;left:1606.5px;top:244.3px;width:30.5px;height:29px;background:#fff;border:1px solid #d2d2d2;border-radius:4px;box-sizing:border-box'></div>
<svg style='position:absolute;left:1611.70px;top:248.80px;overflow:visible' width='20.00' height='20.00' viewBox='-10 -10 20 20'><path d='M-7.4 0Q0 -10 7.4 0Q0 10 -7.4 0Z' fill='none' stroke='#222' stroke-width='2.1' stroke-linejoin='round'/><circle r='3.6' fill='#222'/><circle cx='-1.2' cy='-1.4' r='1.2' fill='#fff'/></svg>
<div class='t' style='left:1449.80px;top:298.00px;font-size:16px;color:#a9a9a9;letter-spacing:-0.483px;-webkit-text-stroke:0.45px #a9a9a9;'>Data</div>
<svg style='position:absolute;left:1488.00px;top:299.50px' width='12.00' height='12.00' viewBox='117.88607788085938 -1408 1428.227783203125 1536' preserveAspectRatio='none'><path fill='#d63347' transform='scale(1,-1)' d='M1482 486q46 -26 59.5 -77.5t-12.5 -97.5l-64 -110q-26 -46 -77.5 -59.5t-97.5 12.5l-266 153v-307q0 -52 -38 -90t-90 -38h-128q-52 0 -90 38t-38 90v307l-266 -153q-46 -26 -97.5 -12.5t-77.5 59.5l-64 110q-26 46 -12.5 97.5t59.5 77.5l266 154l-266 154
q-46 26 -59.5 77.5t12.5 97.5l64 110q26 46 77.5 59.5t97.5 -12.5l266 -153v307q0 52 38 90t90 38h128q52 0 90 -38t38 -90v-307l266 153q46 26 97.5 12.5t77.5 -59.5l64 -110q26 -46 12.5 -97.5t-59.5 -77.5l-266 -154z'/></svg>
<div style='position:absolute;left:1520.5px;top:290.8px;width:320px;height:30.5px;background:#fff;border-radius:4px 0 0 4px;box-shadow:inset 0 0 0 1.3px #dd4a5b,0 0 0 2.4px #d4ebf1'></div>
<div style='position:absolute;left:1840.5px;top:291.1px;width:59.3px;height:29.6px;background:#fff;border:1px solid #d2d2d2;border-left:none;border-radius:0 5px 5px 0;box-sizing:border-box'></div>
<div style='position:absolute;left:1869.8px;top:291.1px;width:1px;height:29.6px;background:#d2d2d2'></div>
<svg style='position:absolute;left:1846.80px;top:298.80px;overflow:visible' width='16' height='16' viewBox='-8 -8 16 16'><circle r='5' fill='none' stroke='#222' stroke-width='1.5'/><path d='M0 -8V-2.2M0 2.2V8M-8 0H-2.2M2.2 0H8' stroke='#222' stroke-width='2.1'/></svg>
<svg style='position:absolute;left:1876.30px;top:298.90px;overflow:visible' width='15' height='16' viewBox='0 0 15 16'><g fill='#222'><rect x='0' y='1.6' width='15' height='2.9' rx='0.6'/><rect x='1.8' y='0' width='2.4' height='2.5' rx='1'/><rect x='10.8' y='0' width='2.4' height='2.5' rx='1'/><rect x='0' y='5.6' width='15' height='10.4' rx='0.6'/></g><rect x='1.60' y='7.00' width='1.5' height='1.5' fill='#fff'/><rect x='1.60' y='10.00' width='1.5' height='1.5' fill='#fff'/><rect x='1.60' y='13.00' width='1.5' height='1.5' fill='#fff'/><rect x='4.80' y='7.00' width='1.5' height='1.5' fill='#fff'/><rect x='4.80' y='10.00' width='1.5' height='1.5' fill='#fff'/><rect x='4.80' y='13.00' width='1.5' height='1.5' fill='#fff'/><rect x='8.00' y='7.00' width='1.5' height='1.5' fill='#fff'/><rect x='8.00' y='10.00' width='1.5' height='1.5' fill='#fff'/><rect x='8.00' y='13.00' width='1.5' height='1.5' fill='#fff'/><rect x='11.20' y='7.00' width='1.5' height='1.5' fill='#fff'/><rect x='11.20' y='10.00' width='1.5' height='1.5' fill='#fff'/><rect x='11.20' y='13.00' width='1.5' height='1.5' fill='#fff'/></svg>
<div class='t' style='left:1434.50px;top:345.00px;font-size:16px;color:#a9a9a9;letter-spacing:0.102px;-webkit-text-stroke:0.45px #a9a9a9;'>Utente</div>
<svg style='position:absolute;left:1488.00px;top:346.50px' width='12.00' height='12.00' viewBox='117.88607788085938 -1408 1428.227783203125 1536' preserveAspectRatio='none'><path fill='#d63347' transform='scale(1,-1)' d='M1482 486q46 -26 59.5 -77.5t-12.5 -97.5l-64 -110q-26 -46 -77.5 -59.5t-97.5 12.5l-266 153v-307q0 -52 -38 -90t-90 -38h-128q-52 0 -90 38t-38 90v307l-266 -153q-46 -26 -97.5 -12.5t-77.5 59.5l-64 110q-26 46 -12.5 97.5t59.5 77.5l266 154l-266 154
q-46 26 -59.5 77.5t12.5 97.5l64 110q26 46 77.5 59.5t97.5 -12.5l266 -153v307q0 52 38 90t90 38h128q52 0 90 -38t38 -90v-307l266 153q46 26 97.5 12.5t77.5 -59.5l64 -110q26 -46 12.5 -97.5t-59.5 -77.5l-266 -154z'/></svg>
<div style='position:absolute;left:1521px;top:339px;width:378.5px;height:29px;background:#fff;border:1px solid #d2d2d2;border-radius:4px;box-sizing:border-box'></div>
<div style='position:absolute;left:1816.5px;top:339px;width:1px;height:29px;background:#d2d2d2'></div>
<div style='position:absolute;left:1840px;top:339px;width:1px;height:29px;background:#d2d2d2'></div>
<div style='position:absolute;left:1870px;top:339px;width:1px;height:29px;background:#d2d2d2'></div>
<svg style='position:absolute;left:1823.50px;top:351.00px;overflow:visible' width='10' height='5.5' viewBox='0 0 10 5.5'><polygon points='0,0 10,0 5,5.5' fill='#222'/></svg>
<svg style='position:absolute;left:1846.50px;top:345.00px;overflow:visible' width='17.00' height='17.00' viewBox='-10 -10 20 20'><g fill='none' stroke='#222' stroke-width='2.3'><path d='M-7.6 0.6A7.5 7.5 0 0 1 4.6 -5.8'/><path d='M7.6 -0.6A7.5 7.5 0 0 1 -4.6 5.8'/></g><g fill='#222'><polygon points='8.1,-9.4 8.1,-3.0 1.7,-3.0'/><polygon points='-8.1,9.4 -8.1,3.0 -1.7,3.0'/></g></svg>
<svg style='position:absolute;left:1874.60px;top:343.50px;overflow:visible' width='20.00' height='20.00' viewBox='-10 -10 20 20'><path d='M-7.4 0Q0 -10 7.4 0Q0 10 -7.4 0Z' fill='none' stroke='#222' stroke-width='2.1' stroke-linejoin='round'/><circle r='3.6' fill='#222'/><circle cx='-1.2' cy='-1.4' r='1.2' fill='#fff'/></svg>
<div class='t' style='left:1400.00px;top:392.70px;font-size:16px;color:#a9a9a9;letter-spacing:-0.234px;-webkit-text-stroke:0.45px #a9a9a9;'>Prestazione</div>
<svg style='position:absolute;left:1488.00px;top:394.20px' width='12.00' height='12.00' viewBox='117.88607788085938 -1408 1428.227783203125 1536' preserveAspectRatio='none'><path fill='#d63347' transform='scale(1,-1)' d='M1482 486q46 -26 59.5 -77.5t-12.5 -97.5l-64 -110q-26 -46 -77.5 -59.5t-97.5 12.5l-266 153v-307q0 -52 -38 -90t-90 -38h-128q-52 0 -90 38t-38 90v307l-266 -153q-46 -26 -97.5 -12.5t-77.5 59.5l-64 110q-26 46 -12.5 97.5t59.5 77.5l266 154l-266 154
q-46 26 -59.5 77.5t12.5 97.5l64 110q26 46 77.5 59.5t97.5 -12.5l266 -153v307q0 52 38 90t90 38h128q52 0 90 -38t38 -90v-307l266 153q46 26 97.5 12.5t77.5 -59.5l64 -110q26 -46 12.5 -97.5t-59.5 -77.5l-266 -154z'/></svg>
<div style='position:absolute;left:1521px;top:386.5px;width:378.5px;height:28.5px;background:#fff;border:1px solid #d2d2d2;border-radius:4px;box-sizing:border-box'></div>
<div style='position:absolute;left:1846px;top:386.5px;width:1px;height:28.5px;background:#d2d2d2'></div>
<div style='position:absolute;left:1870px;top:386.5px;width:1px;height:28.5px;background:#d2d2d2'></div>
<svg style='position:absolute;left:1853.00px;top:398.00px;overflow:visible' width='10' height='5.5' viewBox='0 0 10 5.5'><polygon points='0,0 10,0 5,5.5' fill='#222'/></svg>
<svg style='position:absolute;left:1876.50px;top:392.00px;overflow:visible' width='17.00' height='17.00' viewBox='-10 -10 20 20'><g fill='none' stroke='#222' stroke-width='2.3'><path d='M-7.6 0.6A7.5 7.5 0 0 1 4.6 -5.8'/><path d='M7.6 -0.6A7.5 7.5 0 0 1 -4.6 5.8'/></g><g fill='#222'><polygon points='8.1,-9.4 8.1,-3.0 1.7,-3.0'/><polygon points='-8.1,9.4 -8.1,3.0 -1.7,3.0'/></g></svg>
<div class='t' style='left:1402.20px;top:439.90px;font-size:16px;color:#a9a9a9;letter-spacing:0.188px;-webkit-text-stroke:0.45px #a9a9a9;'>Durata/Qta</div>
<svg style='position:absolute;left:1488.00px;top:441.40px' width='12.00' height='12.00' viewBox='117.88607788085938 -1408 1428.227783203125 1536' preserveAspectRatio='none'><path fill='#d63347' transform='scale(1,-1)' d='M1482 486q46 -26 59.5 -77.5t-12.5 -97.5l-64 -110q-26 -46 -77.5 -59.5t-97.5 12.5l-266 153v-307q0 -52 -38 -90t-90 -38h-128q-52 0 -90 38t-38 90v307l-266 -153q-46 -26 -97.5 -12.5t-77.5 59.5l-64 110q-26 46 -12.5 97.5t59.5 77.5l266 154l-266 154
q-46 26 -59.5 77.5t12.5 97.5l64 110q26 46 77.5 59.5t97.5 -12.5l266 -153v307q0 52 38 90t90 38h128q52 0 90 -38t38 -90v-307l266 153q46 26 97.5 12.5t77.5 -59.5l64 -110q26 -46 12.5 -97.5t-59.5 -77.5l-266 -154z'/></svg>
<div style='position:absolute;left:1520.6px;top:432.7px;width:380px;height:30.3px;background:#fff;box-shadow:inset 0 0 0 1.4px #dd4a5b'></div>
<div class='t' style='left:1451.30px;top:487.70px;font-size:16px;color:#a9a9a9;letter-spacing:0.225px;-webkit-text-stroke:0.45px #a9a9a9;'>Durata</div>
<div class='t' style='left:1375.70px;top:531.20px;font-size:16px;color:#a9a9a9;letter-spacing:0.144px;-webkit-text-stroke:0.45px #a9a9a9;'>Differenza durata</div>
<div class='t' style='left:1442.70px;top:574.70px;font-size:16px;color:#a9a9a9;letter-spacing:0.455px;-webkit-text-stroke:0.45px #a9a9a9;'>Qta/Min</div>
<div class='t' style='left:1433.40px;top:617.40px;font-size:16px;color:#a9a9a9;letter-spacing:-0.291px;-webkit-text-stroke:0.45px #a9a9a9;'>Categoria</div>
<svg style='position:absolute;left:517.8px;top:382.1px;overflow:visible' width='90' height='90' viewBox='-45 -45 90 90'><defs><filter id='sh1' x='-50%' y='-50%' width='200%' height='200%'><feDropShadow dx='0' dy='2' stdDeviation='1.3' flood-color='#000' flood-opacity='0.4'/></filter></defs><g transform='rotate(0)' filter='url(#sh1)'><path d='M11.95 15.28A19.4 19.4 0 1 1 11.95 -15.28L31.50 0Z' fill='#dd0ff0' stroke='#dd0ff0' stroke-width='0.6' stroke-linejoin='round'/></g><text x='0' y='7.6' text-anchor='middle' font-family='Liberation Sans' font-size='20' fill='#fff'>1</text></svg>
<svg style='position:absolute;left:754.5px;top:136px;overflow:visible' width='90' height='90' viewBox='-45 -45 90 90'><defs><filter id='sh2' x='-50%' y='-50%' width='200%' height='200%'><feDropShadow dx='0' dy='2' stdDeviation='1.3' flood-color='#000' flood-opacity='0.4'/></filter></defs><g transform='rotate(-90)' filter='url(#sh2)'><path d='M11.58 15.56A19.4 19.4 0 1 1 11.58 -15.56L32.50 0Z' fill='#dd0ff0' stroke='#dd0ff0' stroke-width='0.6' stroke-linejoin='round'/></g><text x='0' y='5.4' text-anchor='middle' font-family='Liberation Sans' font-size='20' fill='#fff'>2</text></svg>
<svg style='position:absolute;left:1273.6px;top:274.3px;overflow:visible' width='90' height='90' viewBox='-45 -45 90 90'><defs><filter id='sh3' x='-50%' y='-50%' width='200%' height='200%'><feDropShadow dx='0' dy='2' stdDeviation='1.3' flood-color='#000' flood-opacity='0.4'/></filter></defs><g transform='rotate(0)' filter='url(#sh3)'><path d='M11.76 15.43A19.4 19.4 0 1 1 11.76 -15.43L32.00 0Z' fill='#dd0ff0' stroke='#dd0ff0' stroke-width='0.6' stroke-linejoin='round'/></g><text x='1' y='8.2' text-anchor='middle' font-family='Liberation Sans' font-size='20' fill='#fff'>3</text></svg>
</body></html>
